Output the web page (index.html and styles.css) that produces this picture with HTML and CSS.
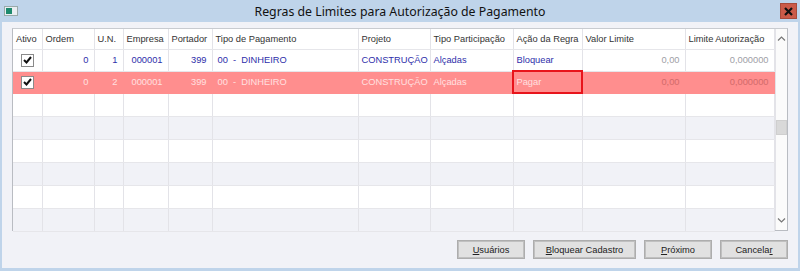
FILE: index.html
```html
<!DOCTYPE html>
<html lang="pt">
<head>
    <meta charset="UTF-8">
    <title>Regras de Limites</title>
    <link rel="stylesheet" href="styles.css">
</head>
<body>
<div class="window">
    <div class="titlebar">
        <span class="app-icon"><span></span></span>
        <span class="title">Regras de Limites para Autorização de Pagamento</span>
        <span class="close">
            <svg width="9" height="9" viewBox="0 0 9 9"><path d="M1 1 L8 8 M8 1 L1 8" stroke="#111" stroke-width="2.2"/></svg>
        </span>
    </div>
    <div class="client">
        <div class="grid">
            <table>
                <colgroup>
                    <col style="width:29px"><col style="width:52px"><col style="width:29px"><col style="width:45px">
                    <col style="width:44px"><col style="width:146px"><col style="width:72px"><col style="width:83px">
                    <col style="width:69px"><col style="width:103px"><col style="width:89px">
                </colgroup>
                <tr class="head">
                    <th>Ativo</th><th>Ordem</th><th>U.N.</th><th>Empresa</th><th>Portador</th><th>Tipo de Pagamento</th>
                    <th>Projeto</th><th>Tipo Participação</th><th>Ação da Regra</th><th>Valor Limite</th><th>Limite Autorização</th>
                </tr>
                <tr class="row data">
                    <td class="c"><span class="check"><svg width="9" height="8" viewBox="0 0 9 8"><path d="M1 4 L3.5 6.5 L8 1" stroke="#111" stroke-width="2" fill="none"/></svg></span></td>
                    <td class="r">0</td><td class="r">1</td><td class="r">000001</td><td class="r">399</td>
                    <td class="pad">00&nbsp; - &nbsp;DINHEIRO</td><td class="r">CONSTRUÇÃO</td><td>Alçadas</td><td>Bloquear</td>
                    <td class="r num">0,00</td><td class="r num">0,000000</td>
                </tr>
                <tr class="row data pink">
                    <td class="c"><span class="check"><svg width="9" height="8" viewBox="0 0 9 8"><path d="M1 4 L3.5 6.5 L8 1" stroke="#111" stroke-width="2" fill="none"/></svg></span></td>
                    <td class="r">0</td><td class="r">2</td><td class="r">000001</td><td class="r">399</td>
                    <td class="pad">00&nbsp; - &nbsp;DINHEIRO</td><td class="r">CONSTRUÇÃO</td><td>Alçadas</td><td class="marked">Pagar</td>
                    <td class="r num">0,00</td><td class="r num">0,000000</td>
                </tr>
                <tr class="row"><td></td><td></td><td></td><td></td><td></td><td></td><td></td><td></td><td></td><td></td><td></td></tr>
                <tr class="row alt"><td></td><td></td><td></td><td></td><td></td><td></td><td></td><td></td><td></td><td></td><td></td></tr>
                <tr class="row"><td></td><td></td><td></td><td></td><td></td><td></td><td></td><td></td><td></td><td></td><td></td></tr>
                <tr class="row alt"><td></td><td></td><td></td><td></td><td></td><td></td><td></td><td></td><td></td><td></td><td></td></tr>
                <tr class="row"><td></td><td></td><td></td><td></td><td></td><td></td><td></td><td></td><td></td><td></td><td></td></tr>
                <tr class="row alt"><td></td><td></td><td></td><td></td><td></td><td></td><td></td><td></td><td></td><td></td><td></td></tr>
            </table>
            <div class="scrollbar">
                <div class="arrow"><svg width="9" height="5" viewBox="0 0 9 5"><path d="M1 4.5 L4.5 1 L8 4.5" stroke="#777" stroke-width="1.2" fill="none"/></svg></div>
                <div class="track"><div class="thumb"></div></div>
                <div class="arrow"><svg width="9" height="5" viewBox="0 0 9 5"><path d="M1 0.5 L4.5 4 L8 0.5" stroke="#777" stroke-width="1.2" fill="none"/></svg></div>
            </div>
        </div>
        <div class="buttons">
            <button class="btn w68"><u>U</u>suários</button>
            <button class="btn w103"><u>B</u>loquear Cadastro</button>
            <button class="btn w68"><u>P</u>róximo</button>
            <button class="btn w68">Cancela<u>r</u></button>
        </div>
    </div>
</div>
</body>
</html>
```
FILE: styles.css
```css
*{
    padding: 0;
    margin: 0;
    box-sizing: border-box;
}

body{
    width: 800px;
    height: 271px;
    overflow: hidden;
    font-family: "Liberation Sans", Arial, sans-serif;
    font-size: 9.3px;
    background: #fff;
}

.window{
    width: 800px;
    height: 271px;
    background: #bfd4ea;
    padding: 0 2px 3px 2px;
    display: flex;
    flex-direction: column;
}

.titlebar{
    height: 22px;
    position: relative;
    display: flex;
    align-items: center;
    justify-content: center;
}

.title{
    font-family: "Noto Sans", "Open Sans", sans-serif;
    font-size: 12.3px;
    color: #111;
}

.app-icon{
    position: absolute;
    left: 2px;
    top: 6px;
    width: 14px;
    height: 10px;
    background: #e9eef2;
    border: 1px solid #9aa;
}

.app-icon span{
    display: block;
    width: 6px;
    height: 6px;
    margin: 1px 0 0 1px;
    background: #1e8a6e;
}

.close{
    position: absolute;
    right: 1px;
    top: 3px;
    width: 17px;
    height: 16px;
    background: #cb5a48;
    border: 1px solid #a84a3a;
    display: flex;
    align-items: center;
    justify-content: center;
}

.client{
    flex: 1;
    background: #f1f2f7;
    padding: 6px 10px 0 10px;
}

.grid{
    display: flex;
    width: 776px;
    height: 203px;
    border: 1px solid #b9bcc2;
    border-top-color: #c8cbd0;
    background: #fff;
}

table{
    width: 760px;
    table-layout: fixed;
    border-collapse: collapse;
}

th, td{
    border-right: 1px solid #e3e3e8;
    border-bottom: 1px solid #e6e6ea;
    padding: 0 3px;
    white-space: nowrap;
    overflow: hidden;
    text-align: left;
}

th{
    height: 20px;
    font-weight: normal;
    color: #333;
    background: #fff;
}

.row td{
    height: 23px;
}

.data td{
    height: 22px;
    color: #2e2eaa;
}

.data td.r{
    text-align: right;
    padding-right: 5px;
}

.data td.pad{
    padding-left: 5px;
}

.data td.num{
    color: #a0a0a6;
}

.data td.c{
    text-align: center;
}

.pink td{
    background: #ff8e8e;
    color: #ffe0e0;
    border-color: #ff8e8e;
}

.pink td.num{
    color: #d26a6a;
}

.pink td.marked{
    outline: 2px solid #e8141b;
    outline-offset: -1px;
}

.alt td{
    background: #f1f2f7;
}

.check{
    display: inline-flex;
    width: 13px;
    height: 13px;
    border: 1px solid #8a8a8a;
    background: #fff;
    align-items: center;
    justify-content: center;
    vertical-align: middle;
}

.scrollbar{
    width: 14px;
    border-left: 1px solid #e3e3e8;
    background: #fbfbfb;
    display: flex;
    flex-direction: column;
}

.arrow{
    height: 19px;
    display: flex;
    align-items: center;
    justify-content: center;
}

.track{
    flex: 1;
    padding-top: 72px;
}

.thumb{
    height: 15px;
    background: #d9d9d9;
    border: 1px solid #cfcfcf;
}

.buttons{
    display: flex;
    justify-content: flex-end;
    gap: 8px;
    margin-top: 9px;
}

.btn{
    height: 19px;
    font-family: "Liberation Sans", Arial, sans-serif;
    font-size: 9.3px;
    color: #222;
    background: #e1e1e1;
    border: 2px solid #c0c0c0;
    outline: 1px solid #adadad;
    outline-offset: -1px;
}

.w68{
    width: 68px;
}

.w103{
    width: 103px;
}
```
